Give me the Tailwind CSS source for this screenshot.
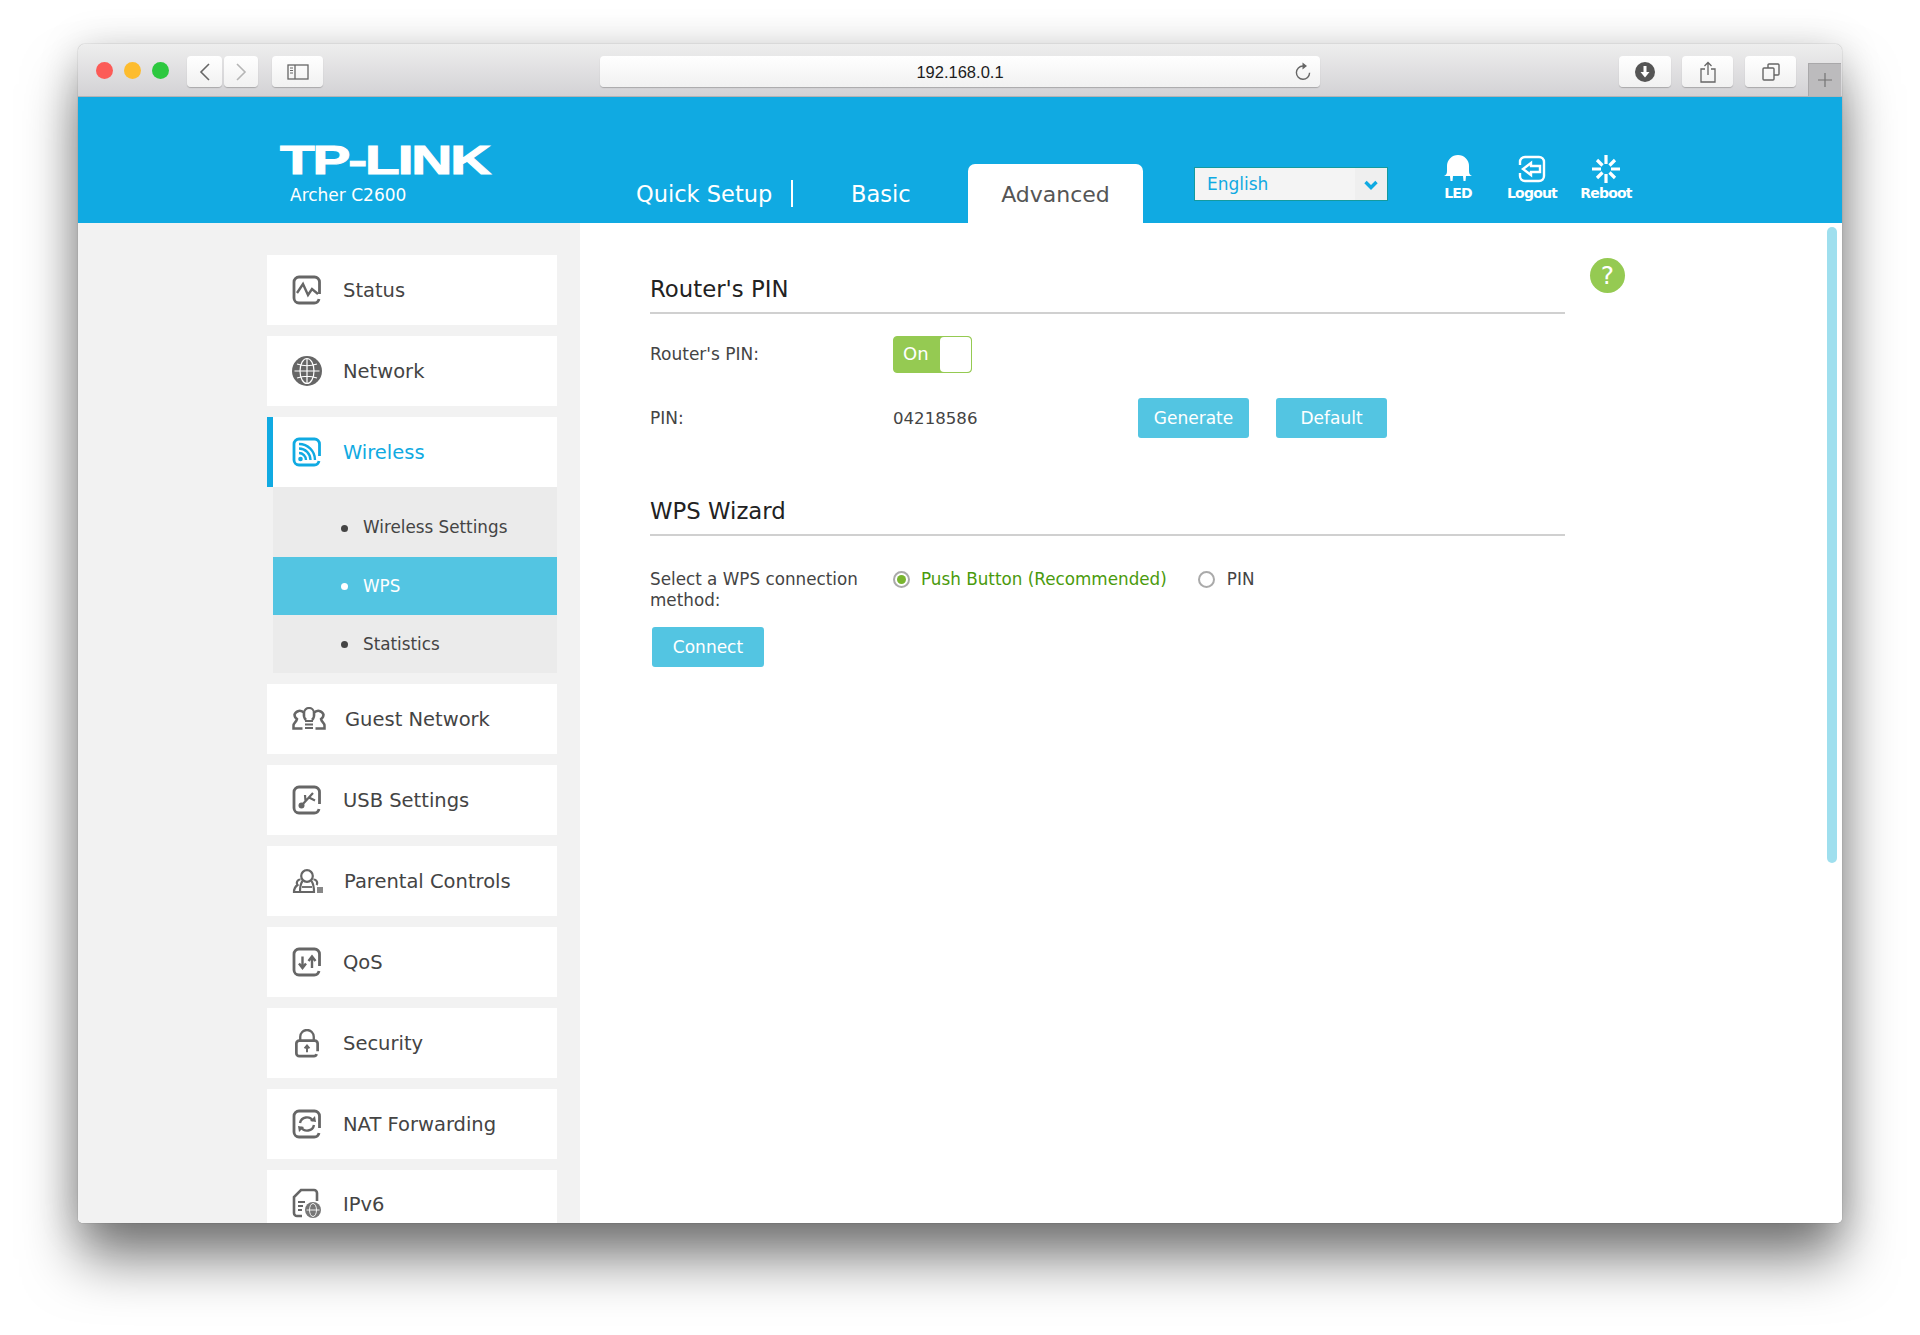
<!DOCTYPE html>
<html lang="en">
<head>
    <meta charset="UTF-8">
    <title>TP-LINK Archer C2600</title>
    <script src="https://cdn.jsdelivr.net/npm/@tailwindcss/browser@4"></script>
</head>
<body class="bg-white h-[1335px] overflow-hidden pt-[44px] pl-[78px] font-['DejaVu_Sans',sans-serif]">
    <div class="w-[1764px] h-[1179px] flex flex-col rounded-t-[7px] rounded-b-[5px] shadow-[0_38px_55px_-2px_rgba(0,0,0,0.5),0_4px_40px_rgba(0,0,0,0.18),0_0_1px_rgba(0,0,0,0.5)]">

        <!-- browser toolbar -->
        <div class="h-[53px] shrink-0 flex items-start rounded-t-[7px] border-b border-[#b4b3b5] bg-gradient-to-b from-[#eeeeee] to-[#d3d2d5] font-['Liberation_Sans',sans-serif]">
            <div class="flex gap-[11px] ml-[18px] mt-[18px]">
                <span class="w-[17px] h-[17px] rounded-full bg-[#fc5b57]"></span>
                <span class="w-[17px] h-[17px] rounded-full bg-[#fdbc2e]"></span>
                <span class="w-[17px] h-[17px] rounded-full bg-[#2dc83f]"></span>
            </div>
            <button class="ml-[18px] mt-[12px] w-[35px] h-[31px] rounded-[4px] bg-gradient-to-b from-white to-[#f1f1f1] shadow-[0_1px_1px_rgba(0,0,0,0.22)] flex items-center justify-center">
                <svg width="12" height="20" viewBox="0 0 12 20" fill="none" stroke="#666" stroke-width="1.6"><path d="M10 2 2 10l8 8"/></svg>
            </button>
            <button class="ml-[2px] mt-[12px] w-[34px] h-[31px] rounded-[4px] bg-gradient-to-b from-white to-[#f1f1f1] shadow-[0_1px_1px_rgba(0,0,0,0.22)] flex items-center justify-center">
                <svg width="12" height="20" viewBox="0 0 12 20" fill="none" stroke="#b5b5b5" stroke-width="1.6"><path d="m2 2 8 8-8 8"/></svg>
            </button>
            <button class="ml-[14px] mt-[12px] w-[51px] h-[31px] rounded-[4px] bg-gradient-to-b from-white to-[#f1f1f1] shadow-[0_1px_1px_rgba(0,0,0,0.22)] flex items-center justify-center">
                <svg width="22" height="16" viewBox="0 0 22 16" fill="none" stroke="#666" stroke-width="1.3"><rect x="1" y="1" width="20" height="14"/><path d="M8 1v14"/><path d="M3 4h3M3 6.500h3M3 9h3" stroke-width="1"/></svg>
            </button>
            <div class="relative ml-[277px] mt-[12px] w-[720px] h-[31px] rounded-[4px] bg-gradient-to-b from-white to-[#f1f1f1] shadow-[0_1px_1px_rgba(0,0,0,0.22)] flex items-center justify-center text-[16.500px] text-[#1c1c1c]">
                <span class="pt-[1px]">192.168.0.1</span>
                <svg class="absolute right-[8px] top-[5px]" width="18" height="21" viewBox="0 0 18 21" fill="none" stroke="#666" stroke-width="1.4"><path d="M9 5a6.600 6.600 0 1 0 6.600 6.800"/><path d="M8.500 1.500 13 5l-4.500 3.500z" fill="#666" stroke="none"/></svg>
            </div>
            <button class="ml-[299px] mt-[12px] w-[52px] h-[31px] rounded-[4px] bg-gradient-to-b from-white to-[#f1f1f1] shadow-[0_1px_1px_rgba(0,0,0,0.22)] flex items-center justify-center">
                <svg width="20" height="20" viewBox="0 0 20 20"><circle cx="10" cy="10" r="10" fill="#555"/><path d="M8.500 4h3v6h3L10 15.500 5.500 10h3z" fill="#fff"/></svg>
            </button>
            <button class="ml-[11px] mt-[12px] w-[51px] h-[31px] rounded-[4px] bg-gradient-to-b from-white to-[#f1f1f1] shadow-[0_1px_1px_rgba(0,0,0,0.22)] flex items-center justify-center">
                <svg width="16" height="22" viewBox="0 0 16 22" fill="none" stroke="#666" stroke-width="1.3"><path d="M5 8H1v13h14V8h-4M8 14V1.500M4.500 5 8 1.500 11.500 5"/></svg>
            </button>
            <button class="ml-[12px] mt-[12px] w-[51px] h-[31px] rounded-[4px] bg-gradient-to-b from-white to-[#f1f1f1] shadow-[0_1px_1px_rgba(0,0,0,0.22)] flex items-center justify-center">
                <svg width="18" height="18" viewBox="0 0 18 18" fill="none" stroke="#666" stroke-width="1.4"><rect x="1" y="5" width="11" height="12" rx="1"/><path d="M6 5V2a1 1 0 0 1 1-1h9a1 1 0 0 1 1 1v9a1 1 0 0 1-1 1h-4"/></svg>
            </button>
            <div class="ml-[12px] mt-[19px] w-[33px] h-[33px] bg-[#bcbbbd] border-l border-t border-[#a9a8aa] flex items-center justify-center">
                <svg width="16" height="16" viewBox="0 0 16 16" stroke="#737373" stroke-width="1.2"><path d="M8 1v14M1 8h14"/></svg>
            </div>
        </div>

        <!-- router header -->
        <header class="h-[126px] shrink-0 flex bg-[#10aae2] text-white">
            <div class="w-[558px] shrink-0 pl-[202px] pt-[45px]">
                <div class="h-[36px] w-[158px] origin-left scale-x-[1.42] text-[40px] leading-[36px] font-bold tracking-[-1.5px] font-['Liberation_Sans',sans-serif] [-webkit-text-stroke:1px_white]">TP-LINK</div>
                <div class="ml-[10px] mt-[5px] text-[17px] leading-[24px]">Archer C2600</div>
            </div>
            <nav class="flex items-end text-[22.500px] leading-[61px]">
                <a class="w-[155px] h-[59px] relative">Quick Setup<span class="absolute left-[155px] top-[16px] w-[2px] h-[27px] bg-white"></span></a>
                <a class="ml-[60px] w-[117px] h-[59px]">Basic</a>
                <a class="w-[175px] h-[59px] rounded-t-[7px] bg-white text-[#555] text-center text-[22px]">Advanced</a>
            </nav>
            <div class="ml-[51px] mt-[70px] w-[194px] h-[34px] border border-[#149a9e] bg-[#f4f4f4] flex items-center justify-between text-[#10aae2] text-[17px] pl-[12px]">
                <span class="mt-[2px]">English</span>
                <span class="w-[32px] h-full flex items-center justify-center bg-[#efefef]">
                    <svg class="mt-[2px]" width="14" height="10" viewBox="0 0 14 10" fill="none" stroke="#10aae2" stroke-width="3.400"><path d="m1.500 2 5.500 5.500L12.500 2"/></svg>
                </span>
            </div>
            <div class="ml-[40px] mt-[58px] flex items-start text-[14px] font-bold text-center tracking-[-0.8px]">
                <div class="w-[60px] flex flex-col items-center gap-[2px]">
                    <svg width="28" height="26" viewBox="0 0 28 26" fill="#fff"><path d="M0 21c2-1 3-2 3-5v-5a11 11 0 0 1 22 0v5c0 3 1 4 3 5z"/><path d="M6 21h3l-.5 5h-2zM19 21h3l-.5 5h-2z"/></svg>
                    <span>LED</span>
                </div>
                <div class="ml-[14px] w-[60px] flex flex-col items-center gap-[2px]">
                    <svg width="30" height="28" viewBox="0 0 30 28" fill="none" stroke="#fff" stroke-width="2.400"><path d="M3 10V7a5 5 0 0 1 5-5h14a5 5 0 0 1 5 5v14a5 5 0 0 1-5 5H8a5 5 0 0 1-5-5v-3"/><path d="M14 8 6 14l8 6v-3h9v-6h-9z"/></svg>
                    <span class="-mt-[2px]">Logout</span>
                </div>
                <div class="ml-[14px] w-[60px] flex flex-col items-center gap-[2px]">
                    <svg width="28" height="28" viewBox="0 0 28 28" fill="none" stroke="#fff" stroke-width="3.200"><path d="M14 0v9M14 19v9M0 14h9M19 14h9M5 5l5.500 5.500M17.500 17.500 23 23M23 5l-5.500 5.500M10.500 17.500 5 23"/></svg>
                    <span class="-mt-[2px]">Reboot</span>
                </div>
            </div>
        </header>

        <main class="relative h-[1000px] shrink-0 flex overflow-hidden rounded-b-[5px] bg-white">
            <!-- side menu -->
            <aside class="w-[502px] shrink-0 bg-[#f2f2f2] pl-[189px] pr-[23px] pt-[32px] flex flex-col gap-[11px] text-[#444] text-[19.500px]">
                <a class="h-[70px] shrink-0 bg-white flex items-center pt-[2px] pl-[25px] gap-[21px]">
                    <svg class="-mt-[2px]" width="30" height="30" viewBox="0 0 30 30" fill="none" stroke="#666" stroke-width="2.800"><path d="M27.500 19V7a5 5 0 0 0-5-5H7a5 5 0 0 0-5 5v16a5 5 0 0 0 5 5h15a5 5 0 0 0 5-4"/><path d="m5 18 6-9 5 11 4-6 6 5" stroke-width="2.400"/></svg>
                    Status
                </a>
                <a class="h-[70px] shrink-0 bg-white flex items-center pt-[2px] pl-[25px] gap-[21px]">
                    <svg class="-mt-[2px]" width="30" height="30" viewBox="0 0 30 30"><circle cx="15" cy="15" r="15" fill="#666"/><g fill="none" stroke="#fff" stroke-width="1.200"><ellipse cx="15" cy="15" rx="7" ry="12.500"/><path d="M15 2.500v25M2.500 15h25M5 8q10 3.500 20 0M5 22q10-3.500 20 0"/></g></svg>
                    Network
                </a>
                <div class="flex flex-col shrink-0">
                    <a class="h-[70px] bg-white flex items-center pt-[2px] pl-[19px] gap-[21px] border-l-[6px] border-[#10aae2] text-[#10aae2]">
                        <svg class="-mt-[2px]" width="30" height="30" viewBox="0 0 30 30" fill="none" stroke="#10aae2" stroke-width="2.800"><path d="M27.500 19V7a5 5 0 0 0-5-5H7a5 5 0 0 0-5 5v16a5 5 0 0 0 5 5h15a5 5 0 0 0 5-4"/><circle cx="8.500" cy="22" r="2.300" fill="#10aae2" stroke="none"/><path d="M7 16a7 7 0 0 1 7 7M7 11.500a11.500 11.500 0 0 1 11.500 11.500M7 7a16 16 0 0 1 16 16" stroke-width="2.400"/></svg>
                        Wireless
                    </a>
                    <div class="ml-[6px] h-[186px] pt-[12px] bg-[#ebebeb] text-[16.800px]">
                        <a class="h-[58px] flex items-center pl-[68px] gap-[15px]"><span class="w-[7px] h-[7px] rounded-full bg-[#444]"></span>Wireless Settings</a>
                        <a class="h-[58px] flex items-center pt-[1px] pl-[68px] gap-[15px] bg-[#53c5e2] text-white"><span class="w-[7px] h-[7px] rounded-full bg-white"></span>WPS</a>
                        <a class="h-[58px] flex items-center pt-[1px] pl-[68px] gap-[15px]"><span class="w-[7px] h-[7px] rounded-full bg-[#444]"></span>Statistics</a>
                    </div>
                </div>
                <a class="h-[70px] shrink-0 bg-white flex items-center pt-[2px] pl-[25px] gap-[19px]">
                    <svg class="-mt-[2px]" width="34" height="24" viewBox="0 0 34 24" fill="none" stroke="#666" stroke-width="2.500"><path d="M14 13c-2-2-2.500-4-2-7a5.500 5.500 0 0 0-9.500 1.500c0 2.500 1 3.500 2.500 4.500-.5 3-3.500 4-3.500 6.500v3h9"/><path d="M20 13c2-2 2.500-4 2-7a5.500 5.500 0 0 1 9.500 1.500c0 2.500-1 3.500-2.500 4.500.5 3 3.500 4 3.500 6.500v3h-9"/><path d="M12 6a5 5 0 0 1 10 0" stroke-width="2.200"/><path d="M13 14h8M13 17.500h8M13 21h8" stroke-width="1.800"/></svg>
                    Guest Network
                </a>
                <a class="h-[70px] shrink-0 bg-white flex items-center pt-[2px] pl-[25px] gap-[21px]">
                    <svg class="-mt-[2px]" width="30" height="30" viewBox="0 0 30 30" fill="none" stroke="#666" stroke-width="2.800"><path d="M27.500 19V7a5 5 0 0 0-5-5H7a5 5 0 0 0-5 5v16a5 5 0 0 0 5 5h15a5 5 0 0 0 5-4"/><circle cx="9.500" cy="20.500" r="3" fill="#666" stroke="none"/><path d="m10 20 11-12M13.500 16l-.5-6M17 12.500l6 3" stroke-width="2.200"/></svg>
                    USB Settings
                </a>
                <a class="h-[70px] shrink-0 bg-white flex items-center pt-[2px] pl-[25px] gap-[21px]">
                    <svg class="-mt-[2px]" width="31" height="24" viewBox="0 0 31 24" fill="none" stroke="#666" stroke-width="2.200"><circle cx="15" cy="7" r="5.800"/><path d="M10.500 12C9 14 8 17 8 23h14c0-3-.5-8-2.500-11"/><path d="M8.500 10.500a3.500 3.500 0 0 0-3 5.500C3.500 17.500 2 19 2 23h6M21.500 10.500a3.500 3.500 0 0 1 3 5.500"/><path d="M10 18h10" stroke-width="1.800"/><rect x="25" y="18" width="6" height="6" fill="#888" stroke="none"/></svg>
                    Parental Controls
                </a>
                <a class="h-[70px] shrink-0 bg-white flex items-center pt-[2px] pl-[25px] gap-[21px]">
                    <svg class="-mt-[2px]" width="30" height="30" viewBox="0 0 30 30" fill="none" stroke="#666" stroke-width="2.800"><path d="M27.500 19V7a5 5 0 0 0-5-5H7a5 5 0 0 0-5 5v16a5 5 0 0 0 5 5h15a5 5 0 0 0 5-4"/><path d="M10.500 9.500V21M7 16.500l3.500 4.500 3.500-4.500M20 21V9.500M16.500 14l3.500-4.500 3.500 4.500" stroke-width="2.400"/></svg>
                    QoS
                </a>
                <a class="h-[70px] shrink-0 bg-white flex items-center pt-[2px] pl-[27px] gap-[23px]">
                    <svg class="-mt-[2px]" width="26" height="29" viewBox="0 0 26 30" fill="none" stroke="#666" stroke-width="2.800"><path d="M24 23v-8a3 3 0 0 0-3-3H5a3 3 0 0 0-3 3v10a3 3 0 0 0 3 3h15a3 3 0 0 0 3-2"/><path d="M6 12V8a7 7 0 0 1 14 0v4" stroke-width="2.400"/><path d="M13 24v-5M10.500 20l2.500-3 2.500 3" stroke-width="2"/></svg>
                    Security
                </a>
                <a class="h-[70px] shrink-0 bg-white flex items-center pt-[2px] pl-[25px] gap-[21px]">
                    <svg class="-mt-[2px]" width="30" height="30" viewBox="0 0 30 30" fill="none" stroke="#666" stroke-width="2.800"><path d="M27.500 19V7a5 5 0 0 0-5-5H7a5 5 0 0 0-5 5v16a5 5 0 0 0 5 5h15a5 5 0 0 0 5-4"/><path d="M8 14a7 7 0 0 1 13-2M22 16a7 7 0 0 1-13 2" stroke-width="2.400"/><path d="m18 12 6 1-1-6zM12 18l-6-1 1 6z" fill="#666" stroke="none"/></svg>
                    NAT Forwarding
                </a>
                <a class="h-[70px] shrink-0 bg-white flex items-start pt-[18px] pl-[25px] gap-[21px]">
                    <svg width="30" height="30" viewBox="0 0 30 30" fill="none" stroke="#666" stroke-width="2.600"><path d="M10 28H5a3 3 0 0 1-3-3V9l7-7h13a3 3 0 0 1 3 3v8"/><path d="M6 14h7M6 18h5M6 22h4" stroke-width="2.200"/><circle cx="21" cy="22" r="8" fill="#777" stroke="none"/><g stroke="#fff" stroke-width="0.900"><ellipse cx="21" cy="22" rx="3.500" ry="6.500"/><path d="M14.500 22h13"/></g></svg>
                    <span class="mt-[2px]">IPv6</span>
                </a>
            </aside>

            <!-- wps page -->
            <section class="flex-1 pl-[70px] pt-[47px] text-[#444] text-[17px]">
                <div class="w-[915px]">
                    <h2 class="h-[44px] border-b-2 border-[#d0d0d0] text-[22.800px] leading-[38px] text-[#222]">Router's PIN</h2>
                    <div class="mt-[22px] h-[38px] flex items-center">
                        <span class="w-[243px]">Router's PIN:</span>
                        <span class="w-[79px] h-[37px] -mt-[1px] rounded-[4px] bg-[#95ca52] border border-[#95ca52] flex justify-between text-white text-[18px] leading-[33px] pl-[9px]">On<span class="w-[31px] rounded-[4px] bg-white"></span></span>
                    </div>
                    <div class="mt-[24px] h-[40px] flex items-center">
                        <span class="w-[243px] pt-[1px]">PIN:</span>
                        <span class="w-[245px] pt-[3px] text-[16.600px]">04218586</span>
                        <button class="w-[111px] h-[40px] pt-[1px] rounded-[3px] bg-[#53c5e2] text-white">Generate</button>
                        <button class="ml-[27px] w-[111px] h-[40px] pt-[1px] rounded-[3px] bg-[#53c5e2] text-white">Default</button>
                    </div>
                    <h2 class="mt-[54px] h-[44px] border-b-2 border-[#d0d0d0] text-[22.800px] leading-[38px] text-[#222]">WPS Wizard</h2>
                    <div class="mt-[33px] flex items-start leading-[21px] text-[16.800px]">
                        <span class="w-[243px]">Select a WPS connection method:</span>
                        <span class="w-[17px] h-[17px] mt-[2px] rounded-full border-2 border-[#aaa] flex items-center justify-center"><span class="w-[9px] h-[9px] rounded-full bg-[#79b52f]"></span></span>
                        <span class="ml-[11px] text-[#4a9a0c]">Push Button (Recommended)</span>
                        <span class="ml-[31px] w-[17px] h-[17px] mt-[2px] rounded-full border-2 border-[#aaa]"></span>
                        <span class="ml-[12px]">PIN</span>
                    </div>
                    <button class="mt-[16px] ml-[2px] w-[112px] h-[40px] pt-[1px] rounded-[3px] bg-[#53c5e2] text-white text-[17px]">Connect</button>
                </div>
            </section>

            <!-- help button and overlay scrollbar -->
            <span class="absolute left-[1512px] top-[35px] w-[35px] h-[35px] rounded-full bg-[#95ca52] text-white text-[25px] leading-[35px] text-center">?</span>
            <span class="absolute left-[1749px] top-[4px] w-[10px] h-[636px] rounded-full bg-[#9fdfee]"></span>
        </main>
    </div>
</body>
</html>
